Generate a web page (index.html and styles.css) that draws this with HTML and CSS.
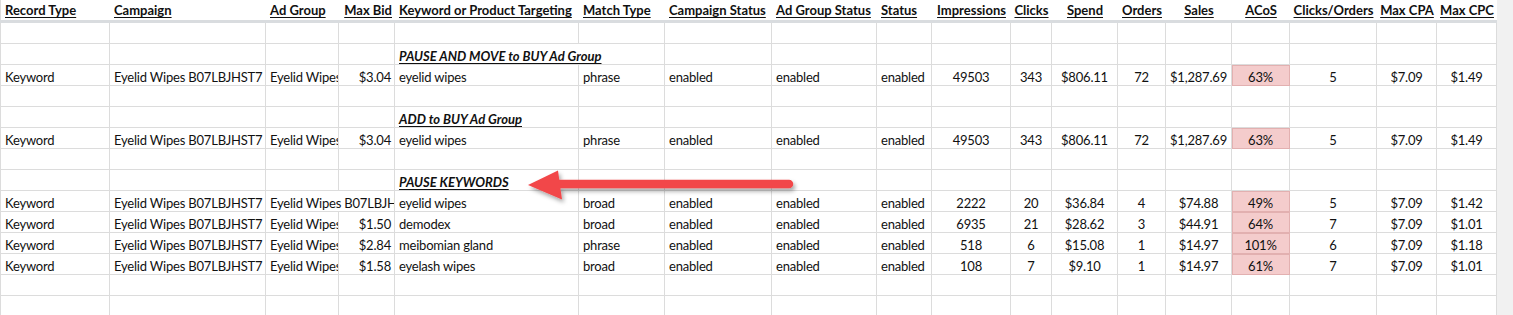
FILE: index.html
```html
<!DOCTYPE html>
<html>
<head>
<meta charset="utf-8">
<link rel="stylesheet" href="styles.css">
</head>
<body>
<div class="sheet">
  <div class="grid">
    <div class="row head">
      <div class="c"><u>Record Type</u></div>
      <div class="c"><u>Campaign</u></div>
      <div class="c"><u>Ad Group</u></div>
      <div class="c r"><u>Max Bid</u></div>
      <div class="c"><u>Keyword or Product Targeting</u></div>
      <div class="c"><u>Match Type</u></div>
      <div class="c"><u>Campaign Status</u></div>
      <div class="c"><u>Ad Group Status</u></div>
      <div class="c"><u>Status</u></div>
      <div class="c m"><u>Impressions</u></div>
      <div class="c m"><u>Clicks</u></div>
      <div class="c m"><u>Spend</u></div>
      <div class="c m"><u>Orders</u></div>
      <div class="c m"><u>Sales</u></div>
      <div class="c m"><u>ACoS</u></div>
      <div class="c m"><u>Clicks/Orders</u></div>
      <div class="c m"><u>Max CPA</u></div>
      <div class="c m"><u>Max CPC</u></div>
    </div>
    <div class="band"></div>

    <div class="row"><div class="c"></div><div class="c"></div><div class="c"></div><div class="c"></div><div class="c"></div><div class="c"></div><div class="c"></div><div class="c"></div><div class="c"></div><div class="c"></div><div class="c"></div><div class="c"></div><div class="c"></div><div class="c"></div><div class="c"></div><div class="c"></div><div class="c"></div><div class="c"></div></div>

    <div class="row"><div class="c"></div><div class="c"></div><div class="c"></div><div class="c"></div><div class="c sec span2"><u>PAUSE AND MOVE to BUY Ad Group</u></div><div class="c"></div><div class="c"></div><div class="c"></div><div class="c"></div><div class="c"></div><div class="c"></div><div class="c"></div><div class="c"></div><div class="c"></div><div class="c"></div><div class="c"></div><div class="c"></div></div>

    <div class="row">
      <div class="c">Keyword</div><div class="c">Eyelid Wipes B07LBJHST7</div><div class="c">Eyelid Wipes B07LBJHST7</div><div class="c r">$3.04</div><div class="c">eyelid wipes</div><div class="c">phrase</div><div class="c">enabled</div><div class="c">enabled</div><div class="c">enabled</div><div class="c m">49503</div><div class="c m">343</div><div class="c m">$806.11</div><div class="c m">72</div><div class="c m">$1,287.69</div><div class="c m pink">63%</div><div class="c m">5</div><div class="c m">$7.09</div><div class="c m">$1.49</div>
    </div>

    <div class="row"><div class="c"></div><div class="c"></div><div class="c"></div><div class="c"></div><div class="c"></div><div class="c"></div><div class="c"></div><div class="c"></div><div class="c"></div><div class="c"></div><div class="c"></div><div class="c"></div><div class="c"></div><div class="c"></div><div class="c"></div><div class="c"></div><div class="c"></div><div class="c"></div></div>

    <div class="row"><div class="c"></div><div class="c"></div><div class="c"></div><div class="c"></div><div class="c sec"><u>ADD to BUY Ad Group</u></div><div class="c"></div><div class="c"></div><div class="c"></div><div class="c"></div><div class="c"></div><div class="c"></div><div class="c"></div><div class="c"></div><div class="c"></div><div class="c"></div><div class="c"></div><div class="c"></div><div class="c"></div></div>

    <div class="row">
      <div class="c">Keyword</div><div class="c">Eyelid Wipes B07LBJHST7</div><div class="c">Eyelid Wipes B07LBJHST7</div><div class="c r">$3.04</div><div class="c">eyelid wipes</div><div class="c">phrase</div><div class="c">enabled</div><div class="c">enabled</div><div class="c">enabled</div><div class="c m">49503</div><div class="c m">343</div><div class="c m">$806.11</div><div class="c m">72</div><div class="c m">$1,287.69</div><div class="c m pink">63%</div><div class="c m">5</div><div class="c m">$7.09</div><div class="c m">$1.49</div>
    </div>

    <div class="row"><div class="c"></div><div class="c"></div><div class="c"></div><div class="c"></div><div class="c"></div><div class="c"></div><div class="c"></div><div class="c"></div><div class="c"></div><div class="c"></div><div class="c"></div><div class="c"></div><div class="c"></div><div class="c"></div><div class="c"></div><div class="c"></div><div class="c"></div><div class="c"></div></div>

    <div class="row"><div class="c"></div><div class="c"></div><div class="c"></div><div class="c"></div><div class="c sec"><u>PAUSE KEYWORDS</u></div><div class="c"></div><div class="c"></div><div class="c"></div><div class="c"></div><div class="c"></div><div class="c"></div><div class="c"></div><div class="c"></div><div class="c"></div><div class="c"></div><div class="c"></div><div class="c"></div><div class="c"></div></div>

    <div class="row">
      <div class="c">Keyword</div><div class="c">Eyelid Wipes B07LBJHST7</div><div class="c span2">Eyelid Wipes B07LBJHST7</div><div class="c">eyelid wipes</div><div class="c">broad</div><div class="c">enabled</div><div class="c">enabled</div><div class="c">enabled</div><div class="c m">2222</div><div class="c m">20</div><div class="c m">$36.84</div><div class="c m">4</div><div class="c m">$74.88</div><div class="c m pink">49%</div><div class="c m">5</div><div class="c m">$7.09</div><div class="c m">$1.42</div>
    </div>
    <div class="row">
      <div class="c">Keyword</div><div class="c">Eyelid Wipes B07LBJHST7</div><div class="c">Eyelid Wipes B07LBJHST7</div><div class="c r">$1.50</div><div class="c">demodex</div><div class="c">broad</div><div class="c">enabled</div><div class="c">enabled</div><div class="c">enabled</div><div class="c m">6935</div><div class="c m">21</div><div class="c m">$28.62</div><div class="c m">3</div><div class="c m">$44.91</div><div class="c m pink">64%</div><div class="c m">7</div><div class="c m">$7.09</div><div class="c m">$1.01</div>
    </div>
    <div class="row">
      <div class="c">Keyword</div><div class="c">Eyelid Wipes B07LBJHST7</div><div class="c">Eyelid Wipes B07LBJHST7</div><div class="c r">$2.84</div><div class="c">meibomian gland</div><div class="c">phrase</div><div class="c">enabled</div><div class="c">enabled</div><div class="c">enabled</div><div class="c m">518</div><div class="c m">6</div><div class="c m">$15.08</div><div class="c m">1</div><div class="c m">$14.97</div><div class="c m pink">101%</div><div class="c m">6</div><div class="c m">$7.09</div><div class="c m">$1.18</div>
    </div>
    <div class="row">
      <div class="c">Keyword</div><div class="c">Eyelid Wipes B07LBJHST7</div><div class="c">Eyelid Wipes B07LBJHST7</div><div class="c r">$1.58</div><div class="c">eyelash wipes</div><div class="c">broad</div><div class="c">enabled</div><div class="c">enabled</div><div class="c">enabled</div><div class="c m">108</div><div class="c m">7</div><div class="c m">$9.10</div><div class="c m">1</div><div class="c m">$14.97</div><div class="c m pink">61%</div><div class="c m">7</div><div class="c m">$7.09</div><div class="c m">$1.01</div>
    </div>

    <div class="row"><div class="c"></div><div class="c"></div><div class="c"></div><div class="c"></div><div class="c"></div><div class="c"></div><div class="c"></div><div class="c"></div><div class="c"></div><div class="c"></div><div class="c"></div><div class="c"></div><div class="c"></div><div class="c"></div><div class="c"></div><div class="c"></div><div class="c"></div><div class="c"></div></div>
    <div class="row"><div class="c"></div><div class="c"></div><div class="c"></div><div class="c"></div><div class="c"></div><div class="c"></div><div class="c"></div><div class="c"></div><div class="c"></div><div class="c"></div><div class="c"></div><div class="c"></div><div class="c"></div><div class="c"></div><div class="c"></div><div class="c"></div><div class="c"></div><div class="c"></div></div>
  </div>
  <div class="gutter"></div>

  <svg class="arrow" width="1513" height="315" viewBox="0 0 1513 315" xmlns="http://www.w3.org/2000/svg">
    <defs>
      <filter id="sh" x="-10%" y="-50%" width="120%" height="200%">
        <feDropShadow dx="2" dy="3" stdDeviation="2" flood-color="#000" flood-opacity="0.35"/>
      </filter>
    </defs>
    <g filter="url(#sh)" fill="#f2474a">
      <line x1="552" y1="184" x2="789" y2="184" stroke="#f2474a" stroke-width="8.5" stroke-linecap="round"/>
      <polygon points="528,185 558,170.5 562,199.5"/>
    </g>
  </svg>
</div>
</body>
</html>
```

FILE: styles.css
```css
html, body {
  margin: 0;
  padding: 0;
  background: #ffffff;
}

.sheet {
  position: relative;
  display: flex;
  width: 1513px;
  height: 315px;
  overflow: hidden;
  font-family: "Lato", "Liberation Sans", sans-serif;
  font-size: 13px;
  color: #111111;
}

.grid {
  width: 1497px;
  flex: none;
}

.gutter {
  flex: 1;
  background: #f1f1f1;
}

.row {
  display: grid;
  grid-template-columns: 110px 156px 73px 56px 184px 86px 107px 105px 55px 79px 41px 66px 48px 66px 58px 87px 60px 60px;
  height: 21px;
}

.c {
  box-sizing: border-box;
  border-right: 1px solid #dcdcdc;
  border-bottom: 1px solid #dcdcdc;
  padding: 5px 3px 0 4px;
  line-height: 15px;
  letter-spacing: -0.2px;
  white-space: nowrap;
  overflow: hidden;
  min-width: 0;
}

.row > .c:first-child {
  border-left: 1px solid #dcdcdc;
}

.head {
  height: 20px;
  font-weight: bold;
}

.head .c {
  border: none;
  padding-top: 3px;
  padding-left: 4px;
  padding-right: 3px;
  letter-spacing: 0;
}

.head .c.m {
  padding-left: 0;
  padding-right: 0;
}

.head .c u,
.sec u {
  text-decoration-thickness: 1px;
  text-underline-offset: 2px;
}

.band {
  height: 3px;
  background: #d9dcdf;
}

.r { text-align: right; }
.m { text-align: center; padding-left: 0; padding-right: 0; }

.span2 { grid-column: span 2; }

.sec {
  font-weight: bold;
  font-style: italic;
  letter-spacing: 0;
}

.pink {
  background: #f4cccc;
  border-right-color: #e2b0b0;
  border-bottom-color: #e2b0b0;
  box-shadow: inset 1px 1px 0 #e2b0b0;
}

.arrow {
  position: absolute;
  left: 0;
  top: 0;
  pointer-events: none;
}
```
